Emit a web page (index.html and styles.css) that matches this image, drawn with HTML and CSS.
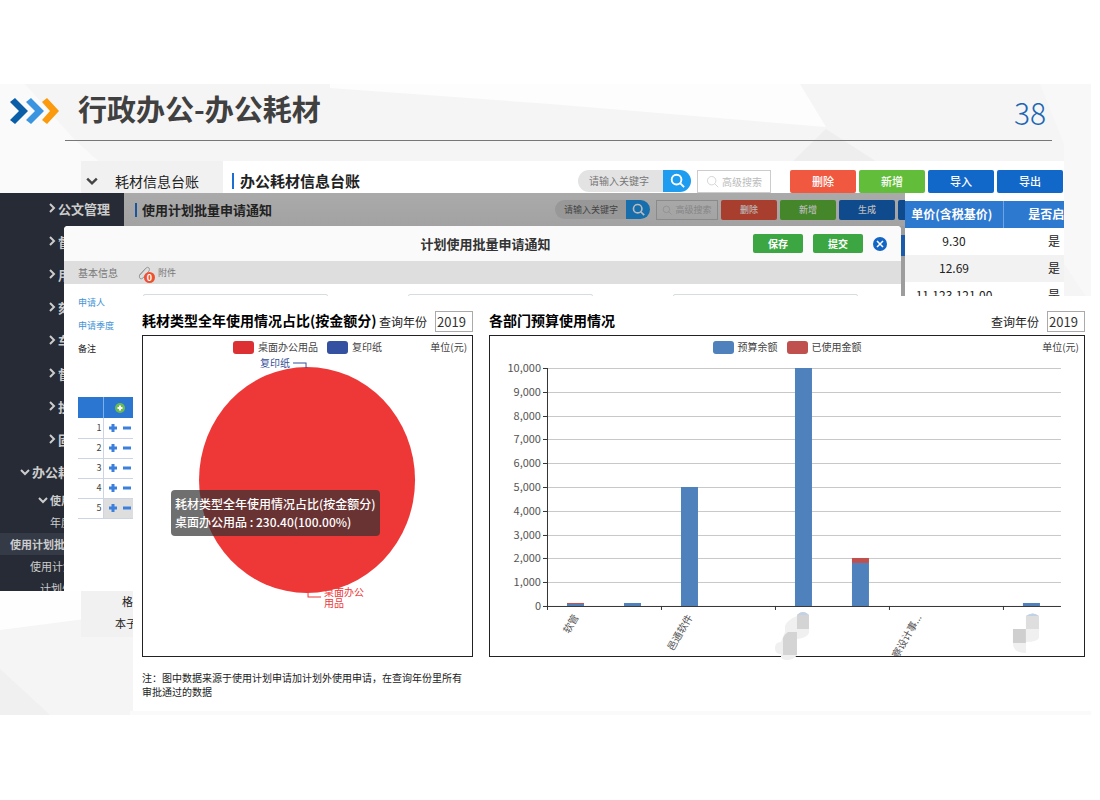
FILE: index.html
```html
<!DOCTYPE html>
<html lang="zh-CN">
<head>
    <meta charset="UTF-8">
    <meta name="viewport" content="width=device-width, initial-scale=1.0">
    <title>行政办公-办公耗材</title>
    <link rel="stylesheet" href="styles.css">
</head>
<body>
    <svg class="sprite" aria-hidden="true">
        <symbol id="search" viewBox="0 0 16 16"><circle cx="7" cy="7" r="5.2"/><path d="M10.8 10.8 15 15"/></symbol>
        <symbol id="right" viewBox="0 0 8 10"><path d="M2 1l4 4-4 4"/></symbol>
        <symbol id="down" viewBox="0 0 10 8"><path d="M1 2l4 4 4-4"/></symbol>
        <symbol id="plusminus" viewBox="0 0 22 8"><path d="M0 4h8M4 0v8M14 4h8"/></symbol>
    </svg>

    <div class="slide">
        <svg class="facets" viewBox="0 0 1091 631" preserveAspectRatio="none" aria-hidden="true">
            <path fill="#fafafa" d="M0 0h25l50 56 60 54H0z"/>
            <path fill="#fdfdfd" d="M330 0h470l26 43L550 20 330 4z"/>
            <path fill="#eeeeee" d="M826 45l54 35H790z"/>
            <path fill="#f8f8f8" d="M1040 0h51v220l-27-40V60z"/>
            <path fill="#fefefe" d="M0 500h85v35L0 546z"/>
            <path fill="#f0f0f0" d="M0 585l50 46H0z"/>
            <path fill="#fafafa" d="M130 627h961v4H130z"/>
        </svg>

        <header class="slide-head">
            <svg class="arrows" viewBox="0 0 49 26" aria-hidden="true">
                <path fill="#0a5ea8" d="M0 4l5-4 13 13L5 26l-5-4 9-9z"/>
                <path fill="#3b94e0" d="M16 4l5-4 13 13-13 13-5-4 9-9z"/>
                <path fill="#fb9a0c" d="M32 4l5-4 12 13-12 13-5-4 8-9z"/>
            </svg>
            <div class="head-line">
                <h1>行政办公-办公耗材</h1>
                <span class="page-no">38</span>
            </div>
        </header>

        <div class="stage">
            <!-- ledger window -->
            <section class="ledger">
                <nav class="tree">
                    <a href="#" class="tree-top"><svg class="ico-down"><use href="#down"/></svg>耗材信息台账</a>
                    <div class="tree-end">
                        <a href="#" class="tree-item">格子</a>
                        <a href="#" class="tree-item tree-item-wide">本子类</a>
                    </div>
                </nav>
                <div class="ledger-main">
                    <div class="toolbar">
                        <h2>办公耗材信息台账</h2>
                        <div class="tools">
                            <div class="search">
                                <input type="text" placeholder="请输入关键字" aria-label="关键字">
                                <button aria-label="搜索"><svg><use href="#search"/></svg></button>
                            </div>
                            <button class="advanced"><svg><use href="#search"/></svg>高级搜索</button>
                            <button class="btn btn-red">删除</button>
                            <button class="btn btn-lime">新增</button>
                            <button class="btn btn-blue">导入</button>
                            <button class="btn btn-blue">导出</button>
                        </div>
                    </div>
                    <div class="price-wrap">
                        <table class="price">
                            <thead><tr><th>单价(含税基价)</th><th>是否启用</th></tr></thead>
                            <tbody>
                                <tr><td>9.30</td><td>是</td></tr>
                                <tr><td>12.69</td><td>是</td></tr>
                                <tr><td>11,123,121.00</td><td>是</td></tr>
                            </tbody>
                        </table>
                    </div>
                </div>
            </section>

            <!-- batch notice window -->
            <section class="app">
                <nav class="menu">
                    <a href="#"><svg class="ico-right"><use href="#right"/></svg>公文管理</a>
                    <a href="#"><svg class="ico-right"><use href="#right"/></svg>督办管理</a>
                    <a href="#"><svg class="ico-right"><use href="#right"/></svg>用印管理</a>
                    <a href="#"><svg class="ico-right"><use href="#right"/></svg>刻章管理</a>
                    <a href="#"><svg class="ico-right"><use href="#right"/></svg>车辆管理</a>
                    <a href="#"><svg class="ico-right"><use href="#right"/></svg>督查管理</a>
                    <a href="#"><svg class="ico-right"><use href="#right"/></svg>投票管理</a>
                    <a href="#"><svg class="ico-right"><use href="#right"/></svg>固定资产</a>
                    <a href="#" class="open"><svg class="ico-down"><use href="#down"/></svg>办公耗材</a>
                    <a href="#" class="sub sub-open"><svg class="ico-down"><use href="#down"/></svg>使用计划</a>
                    <a href="#" class="sub sub-year">年度计划</a>
                    <a href="#" class="sub sub-active">使用计划批量申请</a>
                    <a href="#" class="sub sub-plan">使用计划申请</a>
                    <a href="#" class="sub sub-extra">计划外申请</a>
                </nav>
                <div class="app-main">
                    <div class="toolbar toolbar-small">
                        <h2>使用计划批量申请通知</h2>
                        <div class="tools">
                            <div class="search">
                                <input type="text" placeholder="请输入关键字" aria-label="关键字">
                                <button aria-label="搜索"><svg><use href="#search"/></svg></button>
                            </div>
                            <button class="advanced"><svg><use href="#search"/></svg>高级搜索</button>
                            <button class="btn btn-red">删除</button>
                            <button class="btn btn-lime">新增</button>
                            <button class="btn btn-blue">生成</button>
                            <button class="btn btn-blue" aria-label="更多"></button>
                        </div>
                    </div>
                    <div class="grid-head"></div>
                </div>

                <div class="dialog" role="dialog" aria-labelledby="dialog-title">
                    <div class="dialog-head">
                        <h3 id="dialog-title">计划使用批量申请通知</h3>
                        <button class="btn-green">保存</button>
                        <button class="btn-green">提交</button>
                        <button class="close" aria-label="关闭"><svg viewBox="0 0 14 14"><circle cx="7" cy="7" r="7"/><path d="M4 4l6 6M10 4l-6 6"/></svg></button>
                    </div>
                    <div class="tabs">
                        <a href="#">基本信息</a>
                        <a href="#" class="attach">
                            <svg class="clip" viewBox="0 0 12 14"><path d="M2 9l6-7q2-1.500 3 0 1 1 0 3L5 12q-2 1.500-3 .5T1.500 9L7 3"/></svg>
                            <span class="badge">0</span>附件</a>
                    </div>
                    <div class="fields">
                        <div class="labels">
                            <label for="applicant">申请人</label>
                            <label for="quarter">申请季度</label>
                            <label for="remark" class="plain">备注</label>
                        </div>
                        <input type="text" id="applicant">
                        <input type="text" id="quarter">
                        <input type="text" id="remark">
                    </div>
                    <table class="lines">
                        <thead><tr><th></th><th><svg class="add" viewBox="0 0 10 10"><circle cx="5" cy="5" r="5"/><path d="M2.500 5h5M5 2.500v5"/></svg></th></tr></thead>
                        <tbody>
                            <tr><td>1</td><td><svg class="pm"><use href="#plusminus"/></svg></td></tr>
                            <tr><td>2</td><td><svg class="pm"><use href="#plusminus"/></svg></td></tr>
                            <tr><td>3</td><td><svg class="pm"><use href="#plusminus"/></svg></td></tr>
                            <tr><td>4</td><td><svg class="pm"><use href="#plusminus"/></svg></td></tr>
                            <tr><td>5</td><td class="current"><svg class="pm"><use href="#plusminus"/></svg></td></tr>
                        </tbody>
                    </table>
                </div>
            </section>

            <!-- charts -->
            <section class="report">
                <div class="panel">
                    <div class="panel-head">
                        <h3>耗材类型全年使用情况占比(按金额分)</h3>
                        <label for="year-type">查询年份</label>
                        <input type="text" id="year-type" value="2019">
                    </div>
                    <div class="chart">
                        <div class="legend">
                            <span><i class="red"></i>桌面办公用品</span>
                            <span><i class="navy"></i>复印纸</span>
                            <em>单位(元)</em>
                        </div>
                        <svg class="plot" viewBox="0 0 329 296">
                            <text x="181" y="236" fill="#ee3838">桌面办公</text>
                            <text x="181" y="247" fill="#ee3838">用品</text>
                            <ellipse cx="164" cy="120" rx="108" ry="113" fill="#ee3838"/>
                            <path d="M165 232v5h13" stroke="#ee3838" fill="none"/>
                            <path d="M150 3h13v5" stroke="#35509a" fill="none"/>
                            <text x="117" y="7" fill="#35509a">复印纸</text>
                        </svg>
                        <div class="tooltip">耗材类型全年使用情况占比(按金额分)<br>桌面办公用品 : 230.40(100.00%)</div>
                    </div>
                    <p class="note">注：图中数据来源于使用计划申请加计划外使用申请，在查询年份里所有审批通过的数据</p>
                </div>

                <div class="panel">
                    <div class="panel-head">
                        <h3>各部门预算使用情况</h3>
                        <label for="year-dept">查询年份</label>
                        <input type="text" id="year-dept" value="2019">
                    </div>
                    <div class="chart">
                        <div class="legend">
                            <span><i class="blue"></i>预算余额</span>
                            <span><i class="brick"></i>已使用金额</span>
                            <em>单位(元)</em>
                        </div>
                        <svg class="plot" viewBox="0 0 594 296">
                            <clipPath id="inside"><path d="M0 0h594v296H0z"/></clipPath>
                            <path stroke="#c8c8c8" d="M57 8.500h514M57 32.500h514M57 56.500h514M57 79.500h514M57 103.500h514M57 127.500h514M57 151.500h514M57 175.500h514M57 198.500h514M57 222.500h514"/>
                            <g class="ticks">
                                <text x="51" y="12">10,000</text>
                                <text x="51" y="36">9,000</text>
                                <text x="51" y="60">8,000</text>
                                <text x="51" y="83">7,000</text>
                                <text x="51" y="107">6,000</text>
                                <text x="51" y="131">5,000</text>
                                <text x="51" y="155">4,000</text>
                                <text x="51" y="179">3,000</text>
                                <text x="51" y="202">2,000</text>
                                <text x="51" y="226">1,000</text>
                                <text x="51" y="250">0</text>
                            </g>
                            <g fill="#4f81bd">
                                <rect x="77" y="244" width="17" height="2"/>
                                <rect x="134" y="243" width="17" height="3"/>
                                <rect x="191" y="127" width="17" height="119"/>
                                <rect x="305" y="8" width="17" height="238"/>
                                <rect x="362" y="203" width="17" height="43"/>
                                <rect x="533" y="243" width="17" height="3"/>
                            </g>
                            <g fill="#c0504d">
                                <rect x="77" y="243" width="17" height="1"/>
                                <rect x="362" y="198" width="17" height="5"/>
                            </g>
                            <path stroke="#333" fill="none" d="M57.500 8v242M53 246.500h518M171.500 246v4M285.500 246v4M399.500 246v4M513.500 246v4M53 8.500h4M53 32.500h4M53 56.500h4M53 79.500h4M53 103.500h4M53 127.500h4M53 151.500h4M53 175.500h4M53 198.500h4M53 222.500h4"/>
                            <g class="names" clip-path="url(#inside)">
                                <text transform="translate(89 257) rotate(-60)">软管</text>
                                <text transform="translate(203 257) rotate(-60)">邑通软件</text>
                                <text transform="translate(432 257) rotate(-60)">察设计事...</text>
                            </g>
                            <!-- masked department names -->
                            <path fill="#f0f0f0" d="M295 272v-6q2-6 12-10v13h12v4q-2 5-12 6v16q-3 5-10 5t-6-5v-1q-6 0-6-6t6-6z"/>
                            <path fill="#d4d4d4" d="M307 269v-14q6-6 12 0v14zM293 295v-17q2-4 5-6h9v23z"/>
                            <path fill="#c2d2e6" d="M307 255q6-6 12 0z"/>
                            <path fill="#dedede" d="M536 269v-13q7-5 13 0v13z"/>
                            <path fill="#c2d2e6" d="M536 256q7-5 13 0z"/>
                            <path fill="#cfcfcf" d="M523 269h13v14h-13z"/>
                            <path fill="#f0f0f0" d="M536 269h13v9q-2 4-13 4v11q-13 0-13-10h13z"/>
                        </svg>
                    </div>
                </div>
            </section>
        </div>
    </div>
</body>
</html>
```
FILE: styles.css
```css
*{
    box-sizing: border-box;
}
body{
    margin: 0;
    padding: 84px 9px 0 0;
    background-color: #fff;
    font-family: "Noto Sans CJK SC", "Open Sans", sans-serif;
    font-size: 12px;
    color: #222;
}
h1, h2, h3, p{
    margin: 0;
}
a{
    color: inherit;
    text-decoration: none;
}
button, input{
    font-family: inherit;
    border: none;
    padding: 0;
    margin: 0;
}
svg{
    display: block;
    fill: none;
    flex-shrink: 0;
}
.sprite{
    position: absolute;
    width: 0;
    height: 0;
}
.ico-right{
    width: 8px;
    height: 10px;
    stroke: currentColor;
    stroke-width: 2;
}
.ico-down{
    width: 10px;
    height: 8px;
    stroke: currentColor;
    stroke-width: 2;
}
/* slide */
.slide{
    position: relative;
    background-color: #f5f5f5;
    overflow: hidden;
}
.facets{
    position: absolute;
    width: 100%;
    height: 100%;
}
.slide-head{
    position: relative;
    display: flex;
    height: 57px;
    padding: 0 39px 0 10px;
    gap: 6px;
}
.arrows{
    width: 49px;
    height: 26px;
    margin-top: 14px;
}
.head-line{
    flex: 1;
    display: flex;
    justify-content: space-between;
    padding: 0 6px 0 13px;
    border-bottom: 1px solid #777;
}
h1{
    font-size: 29px;
    line-height: 48px;
    color: #404040;
}
.page-no{
    font-size: 30px;
    font-weight: 300;
    line-height: 56px;
    color: #1c66b4;
}
.stage{
    position: relative;
    height: 574px;
}
/* ledger window */
.ledger{
    position: absolute;
    top: 20px;
    left: 81px;
    right: 27px;
    height: 476px;
    display: flex;
    background-color: #fff;
}
.tree{
    width: 142px;
    display: flex;
    flex-direction: column;
    justify-content: space-between;
    background-color: #f1f1f1;
}
.tree-top{
    display: flex;
    align-items: center;
    gap: 17px;
    height: 39px;
    padding-left: 5px;
    font-size: 14px;
    white-space: nowrap;
}
.tree-top svg{
    width: 12px;
    height: 10px;
    stroke: #444;
}
.tree-item{
    display: block;
    padding-left: 41px;
    font-size: 11px;
    line-height: 22px;
}
.tree-item-wide{
    padding-left: 34px;
}
.tree-end{
    padding-bottom: 3px;
}
.ledger-main{
    flex: 1;
    min-width: 0;
}
.toolbar{
    display: flex;
    align-items: center;
    justify-content: space-between;
    height: 40px;
    padding: 0 1px 0 9px;
}
.toolbar h2{
    padding-left: 6px;
    border-left: 2px solid #1a6fd0;
    font-size: 15px;
    line-height: 16px;
    white-space: nowrap;
}
.tools{
    display: flex;
    gap: 3px;
}
.search{
    display: flex;
    margin-right: 3px;
}
.search input{
    width: 85px;
    height: 22px;
    padding-left: 11px;
    border-radius: 11px 0 0 11px;
    background-color: #e3e3e3;
    font-size: 10px;
}
.search input::placeholder{
    color: #777;
}
.search button{
    width: 28px;
    height: 22px;
    display: grid;
    place-items: center;
    border-radius: 0 11px 11px 0;
    background-color: #1e9df0;
}
.search svg{
    width: 15px;
    height: 15px;
    stroke: #fff;
    stroke-width: 2;
}
.advanced{
    display: flex;
    align-items: center;
    justify-content: center;
    gap: 3px;
    width: 74px;
    height: 23px;
    margin-right: 16px;
    border: 1px solid #ccc;
    background-color: transparent;
    color: #bbb;
    font-size: 10px;
    white-space: nowrap;
}
.advanced svg{
    width: 13px;
    height: 13px;
    stroke: #ccc;
}
.btn{
    width: 66px;
    height: 23px;
    flex-shrink: 0;
    border-radius: 2px;
    color: #fff;
    font-size: 11px;
    font-weight: 500;
    line-height: 20px;
}
.btn-red{
    background-color: #f05840;
}
.btn-lime{
    background-color: #62bd3a;
}
.btn-blue{
    background-color: #1268c8;
}
.price-wrap{
    width: 159px;
    margin-left: auto;
    overflow: hidden;
}
.price{
    width: 200px;
    table-layout: fixed;
    border-collapse: collapse;
    text-align: center;
}
.price th{
    height: 27px;
    padding: 0 4px 2px 0;
    background-color: #2e79d0;
    color: #fff;
    font-size: 12px;
    line-height: 18px;
    white-space: nowrap;
}
.price th:first-child{
    width: 98px;
    border-right: 1px solid #6ea4e2;
}
.price td{
    height: 27px;
    padding: 0 0 2px;
    line-height: 18px;
}
.price tr:nth-child(even) td{
    background-color: #f2f2f2;
}
/* batch notice window */
.app{
    position: absolute;
    top: 52px;
    left: 0;
    right: 186px;
    height: 398px;
    display: flex;
    overflow: hidden;
    background-color: #9d9d9d;
}
.menu{
    width: 124px;
    flex-shrink: 0;
    background-color: #262b35;
    color: #ccc;
    white-space: nowrap;
}
.menu a{
    display: flex;
    align-items: center;
    gap: 2px;
    height: 33px;
    padding: 0 0 3px 48px;
    font-size: 13px;
    font-weight: bold;
}
.menu .open{
    height: 32px;
    padding-left: 20px;
}
.menu .sub{
    height: 22px;
    padding-bottom: 1px;
    font-size: 11px;
    font-weight: normal;
}
.menu .sub-open{
    padding-left: 38px;
    font-weight: bold;
}
.menu .sub-year{
    padding-left: 50px;
}
.menu .sub-active{
    padding-left: 10px;
    background-color: #343a46;
    font-weight: bold;
}
.menu .sub-plan{
    padding-left: 30px;
}
.menu .sub-extra{
    padding-left: 40px;
}
.app-main{
    flex: 1;
    min-width: 0;
}
.toolbar-small{
    height: 33px;
    padding-left: 11px;
    background-image: linear-gradient(#aaa, #a2a2a2);
}
.toolbar-small h2{
    padding-left: 5px;
    border-color: #1a559c;
    font-size: 13px;
    line-height: 14px;
}
.toolbar-small .tools{
    margin-right: -50px;
    align-items: center;
}
.toolbar-small .search input{
    width: 71px;
    height: 19px;
    padding-left: 9px;
    background-color: #989898;
    font-size: 9px;
}
.toolbar-small .search input::placeholder{
    color: #444;
}
.toolbar-small .search button{
    width: 24px;
    height: 19px;
    background-color: #176eac;
}
.toolbar-small .search svg{
    width: 13px;
    height: 13px;
    stroke: #bbb;
}
.toolbar-small .advanced{
    width: 62px;
    height: 20px;
    margin-right: 0;
    border-color: #8a8a8a;
    color: #858585;
    font-size: 9px;
}
.toolbar-small .advanced svg{
    width: 10px;
    height: 10px;
    stroke: #888;
}
.toolbar-small .btn{
    width: 56px;
    height: 20px;
    font-size: 9px;
    line-height: 18px;
    color: #bbb;
}
.toolbar-small .btn-red{
    background-color: #a83f2e;
}
.toolbar-small .btn-lime{
    background-color: #45862a;
}
.toolbar-small .btn-blue{
    background-color: #0f4a8d;
}
.grid-head{
    height: 21px;
    margin-top: 9px;
    background-color: #1c5ba9;
}
/* dialog */
.dialog{
    position: absolute;
    top: 33px;
    left: 64px;
    right: 4px;
    bottom: 0;
    border-radius: 4px 4px 0 0;
    background-color: #fff;
    overflow: hidden;
}
.dialog-head{
    display: flex;
    align-items: center;
    gap: 10px;
    height: 35px;
    padding-right: 14px;
    background-color: #fafafa;
}
.dialog-head h3{
    flex: 1;
    padding-left: 164px;
    text-align: center;
    font-size: 13px;
    line-height: 18px;
    color: #333;
}
.btn-green{
    width: 50px;
    height: 19px;
    border-radius: 2px;
    background-color: #3ca642;
    color: #fff;
    font-size: 10px;
    font-weight: bold;
    line-height: 16px;
}
.close{
    width: 14px;
    height: 14px;
    background: none;
}
.close circle{
    fill: #1464c4;
}
.close path{
    stroke: #fff;
    stroke-width: 1.5;
}
.tabs{
    display: flex;
    align-items: center;
    gap: 20px;
    height: 23px;
    padding-left: 14px;
    background-color: #dedede;
    color: #777;
    font-size: 10px;
}
.attach{
    position: relative;
    display: flex;
    align-items: center;
    gap: 8px;
    font-size: 9px;
}
.clip{
    width: 12px;
    height: 14px;
    stroke: #999;
}
.badge{
    position: absolute;
    top: 6px;
    left: 6px;
    width: 11px;
    height: 11px;
    border-radius: 50%;
    background-color: #ee5030;
    color: #fff;
    font-weight: bold;
    line-height: 11px;
    text-align: center;
}
.fields{
    display: flex;
    align-items: flex-start;
    height: 113px;
    padding: 7px 0 0 14px;
}
.labels{
    width: 65px;
    flex-shrink: 0;
}
.fields label{
    display: block;
    color: #3f93d6;
    font-size: 9px;
    line-height: 23px;
}
.fields .plain{
    color: #222;
}
.fields input{
    width: 185px;
    height: 20px;
    margin: 3px 80px 0 0;
    flex-shrink: 0;
    border: 1px solid #d5dde0;
    border-radius: 2px;
}
.lines{
    width: 90px;
    margin-left: 14px;
    table-layout: fixed;
    border-collapse: collapse;
    font-size: 9px;
    color: #444;
}
.lines th{
    height: 21px;
    padding: 0 0 0 11px;
    background-color: #2a76d0;
}
.lines th:first-child{
    width: 25px;
    border-right: 1px solid #7fb0ea;
}
.lines td{
    height: 20px;
    padding: 0 1px 0 5px;
    border-bottom: 1px solid #ccd4e6;
    line-height: 12px;
}
.lines td:first-child{
    border-right: 1px solid #ccd4e6;
    text-align: right;
}
.lines .current{
    background-color: #dedede;
}
.add{
    width: 10px;
    height: 10px;
}
.add circle{
    fill: #6cbb52;
}
.add path{
    stroke: #fff;
    stroke-width: 2;
}
.pm{
    width: 22px;
    height: 8px;
    stroke: #3b80dc;
    stroke-width: 3;
}
/* report */
.report{
    position: absolute;
    top: 155px;
    left: 133px;
    right: 0;
    height: 415px;
    display: grid;
    grid-template-columns: 5fr 9fr;
    gap: 16px;
    padding: 15px 6px 0 9px;
    background-color: #fff;
}
.panel{
    min-width: 0;
}
.panel-head{
    display: flex;
    align-items: center;
    height: 21px;
    margin-bottom: 3px;
    white-space: nowrap;
}
.panel-head h3{
    flex: 1;
    padding-bottom: 2px;
    font-size: 14px;
    line-height: 19px;
    color: #000;
}
.panel-head label{
    margin-right: 8px;
}
.panel-head input{
    width: 38px;
    height: 21px;
    padding: 0 0 1px 1px;
    border: 1px solid #aaa;
    font-size: 13px;
    color: #333;
}
.chart{
    position: relative;
    border: 1px solid #222;
}
.legend{
    position: relative;
    display: flex;
    align-items: center;
    justify-content: center;
    gap: 9px;
    height: 24px;
    padding-bottom: 2px;
    font-size: 10px;
    line-height: 20px;
    color: #444;
}
.legend span{
    display: flex;
    align-items: center;
    gap: 4px;
}
.legend i{
    width: 21px;
    height: 13px;
    border-radius: 3px;
}
.legend em{
    position: absolute;
    right: 5px;
    font-style: normal;
}
.red{
    background-color: #dc3032;
}
.navy{
    background-color: #3450a0;
}
.blue{
    background-color: #4f81bd;
}
.brick{
    background-color: #c0504d;
}
.plot{
    width: 100%;
    overflow: visible;
    font-size: 10px;
}
.ticks{
    font-size: 11px;
    fill: #555;
    text-anchor: end;
}
.names{
    fill: #555;
    text-anchor: end;
}
.tooltip{
    position: absolute;
    top: 154px;
    left: 28px;
    padding: 5px 4px;
    border-radius: 4px;
    background-color: rgba(50, 50, 50, 0.7);
    color: #fff;
    font-weight: 500;
    line-height: 18px;
    white-space: nowrap;
}
.note{
    padding: 14px 4px 0 0;
    font-size: 10px;
    line-height: 14px;
}
```
